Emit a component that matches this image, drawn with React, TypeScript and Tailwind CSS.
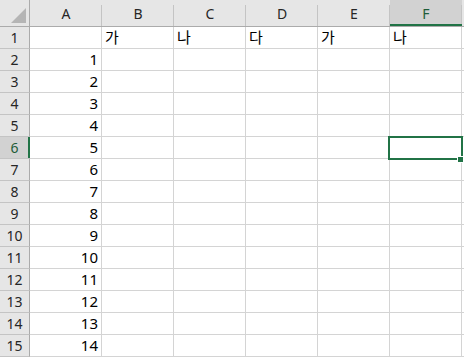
import React from "react";

const cols = ["A", "B", "C", "D", "E", "F", ""];
const rowData: Record<number, Record<string, string>> = {
  1: { B: "가", C: "나", D: "다", E: "가", F: "나" },
};
for (let i = 2; i <= 15; i++) rowData[i] = { A: String(i - 1) };

export default function App() {
  const rows = Array.from({ length: 15 }, (_, i) => i + 1);
  return (
    <div
      className="relative w-[464px] h-[358px] overflow-hidden bg-white"
      style={{ fontFamily: '"Noto Sans", "Noto Sans CJK KR", sans-serif' }}
    >
      <div className="grid grid-cols-[30px_repeat(7,72px)] grid-rows-[27px_repeat(15,22px)] w-max">
        {/* corner */}
        <div className="relative bg-[#e6e6e6] border-r border-b border-[#ababab]">
          <div
            className="absolute right-[3px] bottom-[3px] w-[15px] h-[15px] bg-[#b5b5b5]"
            style={{ clipPath: "polygon(100% 0, 100% 100%, 0 100%)" }}
          />
        </div>
        {cols.map((c, i) => {
          const sel = c === "F";
          return (
            <div
              key={i}
              className={
                "relative flex items-center justify-center text-[14px] border-b " +
                (sel
                  ? "bg-[#d2d2d2] text-[#1e5c38] border-[#ababab]"
                  : "bg-[#e6e6e6] text-[#262626] border-[#ababab]")
              }
            >
              <div className="absolute right-0 top-[5px] bottom-0 w-px bg-[#c4c4c4]" />
              {sel && <div className="absolute left-0 right-0 bottom-0 h-[2px] bg-[#217346]" />}
              <span className="pt-[1px]">{c}</span>
            </div>
          );
        })}
        {rows.map((r) => {
          const sel = r === 6;
          return (
            <React.Fragment key={r}>
              <div
                className={
                  "relative flex items-center justify-center text-[14px] border-b border-r " +
                  (sel
                    ? "bg-[#d2d2d2] text-[#1e5c38] border-b-[#c4c4c4] border-r-[#ababab]"
                    : "bg-[#e6e6e6] text-[#262626] border-b-[#c4c4c4] border-r-[#ababab]")
                }
              >
                {sel && <div className="absolute top-0 bottom-0 right-[-1px] w-[2px] bg-[#217346]" />}
                {r}
              </div>
              {cols.map((c, i) => {
                const v = rowData[r]?.[c] ?? "";
                const isNum = /^\d+$/.test(v);
                return (
                  <div
                    key={i}
                    className={
                      "flex items-center border-r border-b border-[#d4d4d4] text-[15px] text-black px-[3px] " +
                      (isNum ? "justify-end" : "justify-start")
                    }
                  >
                    {v}
                  </div>
                );
              })}
            </React.Fragment>
          );
        })}
      </div>
      {/* selection box on F6 */}
      <div className="absolute left-[388px] top-[136px] w-[75px] h-[24px] border-2 border-[#217346]" />
      <div className="absolute left-[457px] top-[156px] w-[7px] h-[7px] bg-[#217346] border border-white" />
    </div>
  );
}
